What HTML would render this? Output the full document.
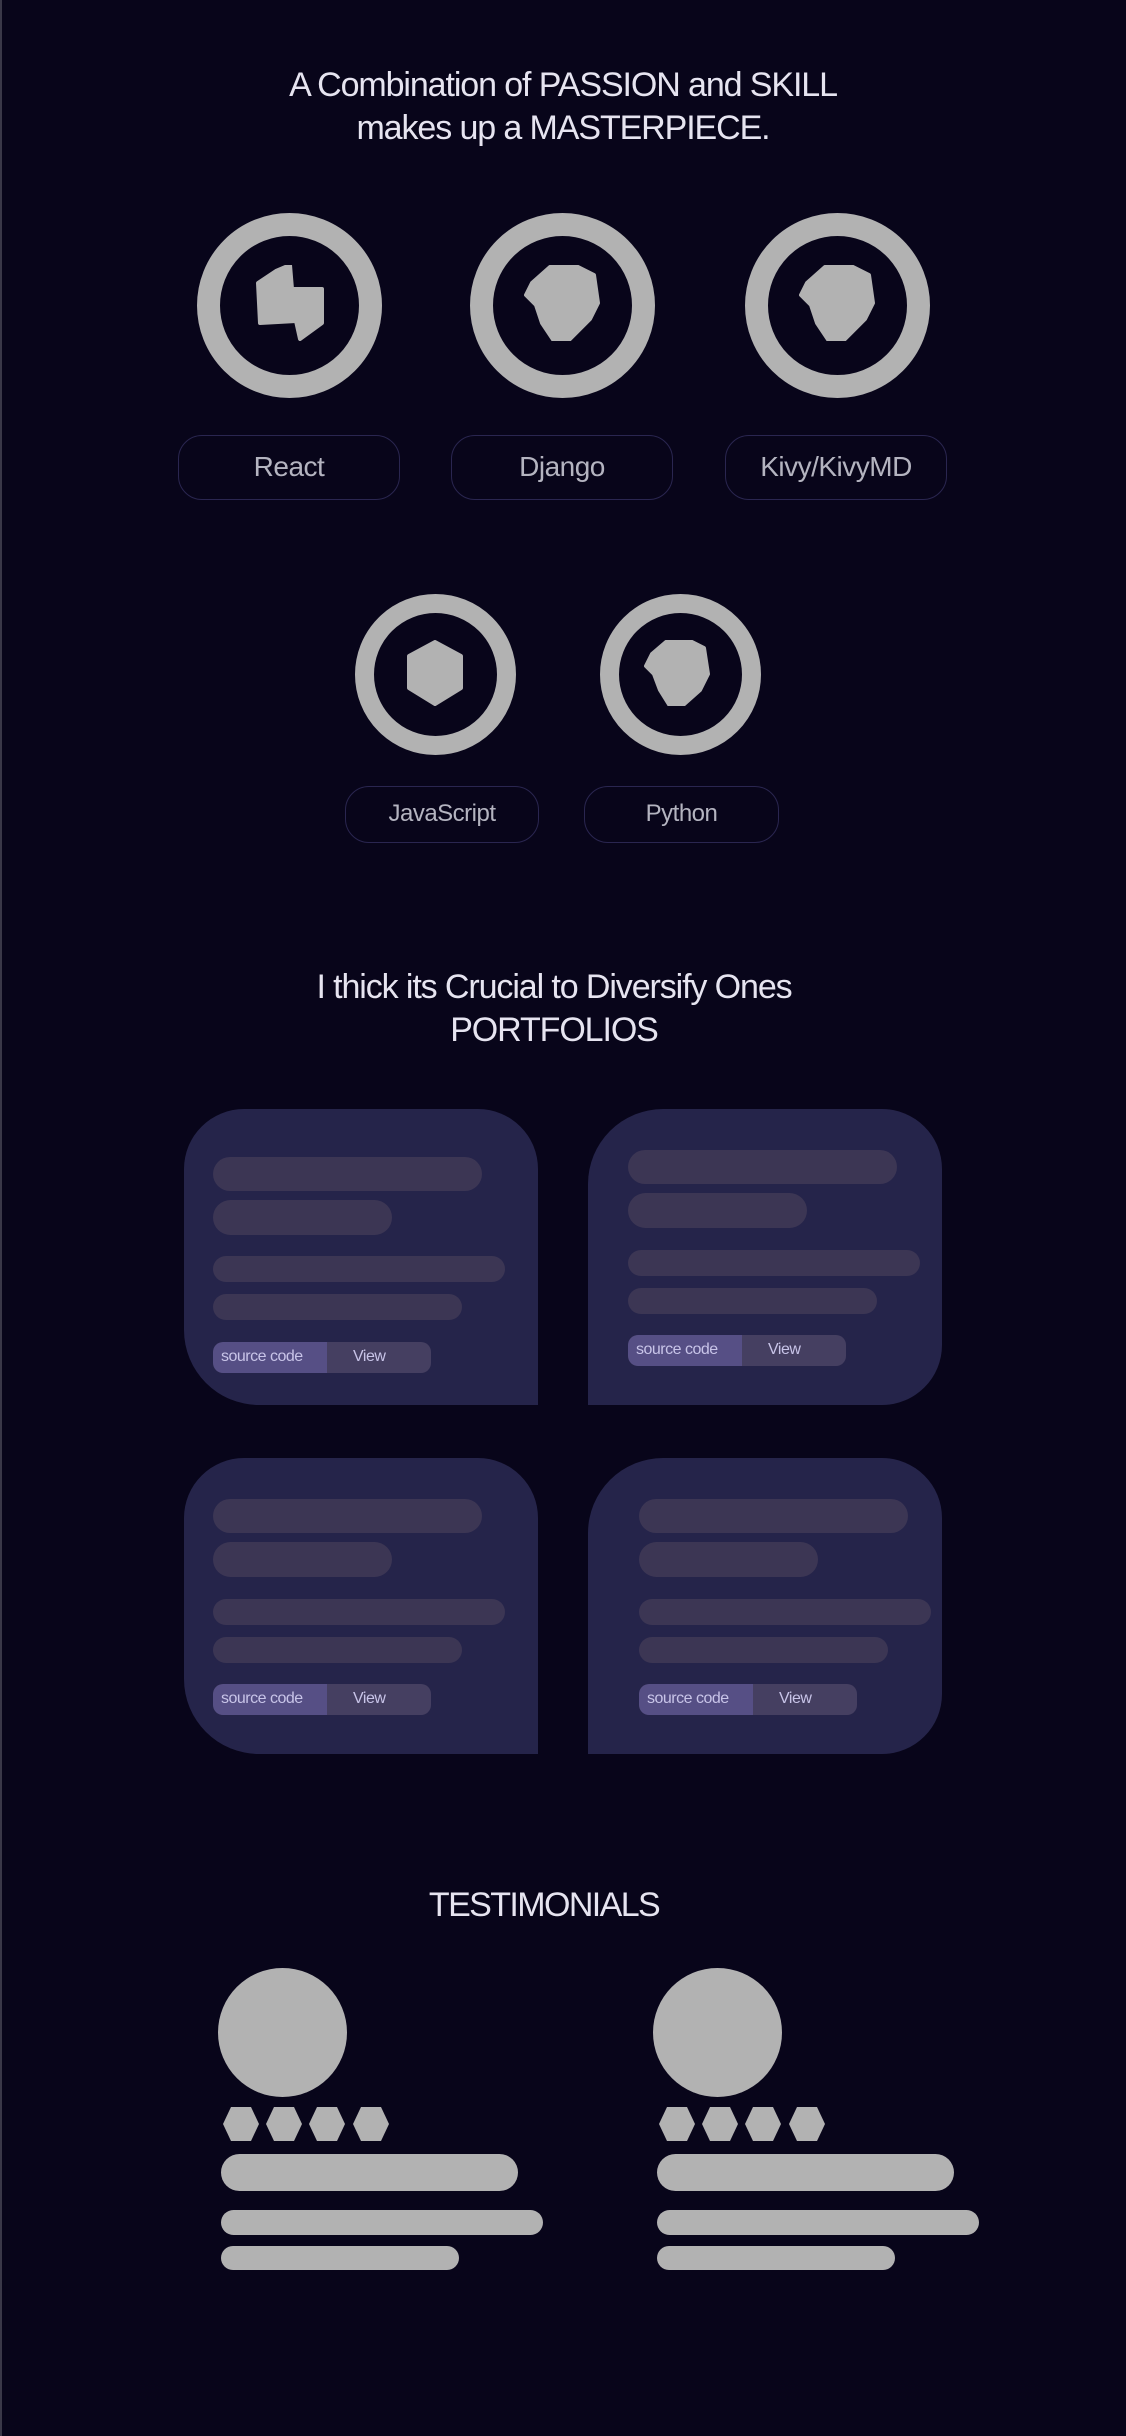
<!DOCTYPE html>
<html><head><meta charset="utf-8"><style>
*{margin:0;padding:0;box-sizing:border-box}
body{width:1126px;height:2436px;background:#08051a;position:relative;overflow:hidden;font-family:"Liberation Sans",sans-serif}
.a{position:absolute}
.h{position:absolute;left:0;width:1126px;text-align:center;color:#e6e4f0;font-size:34px;line-height:43px;letter-spacing:-1.1px}
.ring{position:absolute;border-radius:50%;border:solid #b2b2b2}
.pill{position:absolute;border:1.5px solid #2a2650;border-radius:24px;color:#b4b4c0;text-align:center;letter-spacing:-0.5px}
.card{position:absolute;background:#25244a;width:354px;height:296px}
.bar{position:absolute;background:#3c3654;border-radius:18px}
.btn{position:absolute;height:31px;width:218px;border-radius:10px;background:#453f61;overflow:hidden;font-size:16px;color:#c8c4e8;letter-spacing:-0.5px}
.btn span{position:absolute;top:6px}
.btn .s{left:0;top:0;width:114px;height:31px;background:#564f85;border-radius:10px 0 0 10px}
.g{position:absolute;background:#b2b2b2;border-radius:20px}
</style></head><body>
<div class="a" style="left:0;top:0;width:2px;height:2436px;background:#3a3848"></div>
<div class="h" style="top:64px">A Combination of PASSION and SKILL<br>makes up a MASTERPIECE.</div>

<div class="ring" style="left:197px;top:213px;width:185px;height:185px;border-width:23px"></div>
<div class="ring" style="left:470px;top:213px;width:185px;height:185px;border-width:23px"></div>
<div class="ring" style="left:745px;top:213px;width:185px;height:185px;border-width:23px"></div>
<svg class="a" style="left:254px;top:265px" width="72" height="76" viewBox="0 0 72 76"><path d="M22 6 L36 0 L38 24 L68 24 L68 58 L46 74 L42 56 L6 58 L4 18 Z" fill="#b2b2b2" stroke="#b2b2b2" stroke-width="4" stroke-linejoin="round"/></svg>
<svg class="a" style="left:520px;top:265px" width="80" height="76" viewBox="0 0 80 76"><path d="M30 2 L54 0 L74 10 L78 38 L70 54 L48 76 L34 76 L22 58 L16 40 L6 30 L12 18 Z" fill="#b2b2b2" stroke="#b2b2b2" stroke-width="4" stroke-linejoin="round"/></svg>
<svg class="a" style="left:795px;top:265px" width="80" height="76" viewBox="0 0 80 76"><path d="M30 2 L54 0 L74 10 L78 38 L70 54 L48 76 L34 76 L22 58 L16 40 L6 30 L12 18 Z" fill="#b2b2b2" stroke="#b2b2b2" stroke-width="4" stroke-linejoin="round"/></svg>

<div class="pill" style="left:178px;top:435px;width:222px;height:65px;font-size:28px;line-height:62px">React</div>
<div class="pill" style="left:451px;top:435px;width:222px;height:65px;font-size:28px;line-height:62px">Django</div>
<div class="pill" style="left:725px;top:435px;width:222px;height:65px;font-size:28px;line-height:62px">Kivy/KivyMD</div>

<div class="ring" style="left:355px;top:594px;width:161px;height:161px;border-width:19px"></div>
<div class="ring" style="left:600px;top:594px;width:161px;height:161px;border-width:19px"></div>
<svg class="a" style="left:405px;top:640px" width="60" height="66" viewBox="0 0 60 66"><path d="M30 2 L56 16 L56 48 L30 64 L4 48 L4 16 Z" fill="#b2b2b2" stroke="#b2b2b2" stroke-width="4" stroke-linejoin="round"/></svg>
<svg class="a" style="left:642px;top:640px" width="70" height="66" viewBox="0 0 70 66"><path d="M24 2 L46 0 L62 8 L66 34 L58 50 L40 66 L28 66 L18 50 L12 34 L4 26 L10 14 Z" fill="#b2b2b2" stroke="#b2b2b2" stroke-width="4" stroke-linejoin="round"/></svg>

<div class="pill" style="left:345px;top:786px;width:194px;height:57px;font-size:24px;line-height:54px">JavaScript</div>
<div class="pill" style="left:584px;top:786px;width:195px;height:57px;font-size:24px;line-height:54px">Python</div>

<div class="h" style="top:966px;left:-9px">I thick its Crucial to Diversify Ones<br>PORTFOLIOS</div>

<div class="card" style="left:184px;top:1109px;border-radius:60px 60px 0 75px"></div>
<div class="bar" style="left:213px;top:1157px;width:269px;height:34px"></div>
<div class="bar" style="left:213px;top:1200px;width:179px;height:35px"></div>
<div class="bar" style="left:213px;top:1256px;width:292px;height:26px"></div>
<div class="bar" style="left:213px;top:1294px;width:249px;height:26px"></div>
<div class="btn" style="left:213px;top:1342px"><div class="s"></div><span style="left:8px">source code</span><span style="left:140px">View</span></div>

<div class="card" style="left:588px;top:1109px;border-radius:75px 60px 60px 0"></div>
<div class="bar" style="left:628px;top:1150px;width:269px;height:34px"></div>
<div class="bar" style="left:628px;top:1193px;width:179px;height:35px"></div>
<div class="bar" style="left:628px;top:1250px;width:292px;height:26px"></div>
<div class="bar" style="left:628px;top:1288px;width:249px;height:26px"></div>
<div class="btn" style="left:628px;top:1335px"><div class="s"></div><span style="left:8px">source code</span><span style="left:140px">View</span></div>

<div class="card" style="left:184px;top:1458px;border-radius:60px 60px 0 75px"></div>
<div class="bar" style="left:213px;top:1499px;width:269px;height:34px"></div>
<div class="bar" style="left:213px;top:1542px;width:179px;height:35px"></div>
<div class="bar" style="left:213px;top:1599px;width:292px;height:26px"></div>
<div class="bar" style="left:213px;top:1637px;width:249px;height:26px"></div>
<div class="btn" style="left:213px;top:1684px"><div class="s"></div><span style="left:8px">source code</span><span style="left:140px">View</span></div>

<div class="card" style="left:588px;top:1458px;border-radius:75px 60px 60px 0"></div>
<div class="bar" style="left:639px;top:1499px;width:269px;height:34px"></div>
<div class="bar" style="left:639px;top:1542px;width:179px;height:35px"></div>
<div class="bar" style="left:639px;top:1599px;width:292px;height:26px"></div>
<div class="bar" style="left:639px;top:1637px;width:249px;height:26px"></div>
<div class="btn" style="left:639px;top:1684px"><div class="s"></div><span style="left:8px">source code</span><span style="left:140px">View</span></div>

<div class="h" style="top:1884px;left:-19px;letter-spacing:-1.6px">TESTIMONIALS</div>

<div class="g" style="left:218px;top:1968px;width:129px;height:129px;border-radius:50%"></div>
<div class="g" style="left:653px;top:1968px;width:129px;height:129px;border-radius:50%"></div>
<svg class="a" style="left:223px;top:2107px" width="180" height="34" viewBox="0 0 180 34"><g fill="#b2b2b2"><path d="M8 0H28L36 17L28 34H8L0 17Z"/><path d="M51 0H71L79 17L71 34H51L43 17Z"/><path d="M94 0H114L122 17L114 34H94L86 17Z"/><path d="M138 0H158L166 17L158 34H138L130 17Z"/></g></svg>
<svg class="a" style="left:659px;top:2107px" width="180" height="34" viewBox="0 0 180 34"><g fill="#b2b2b2"><path d="M8 0H28L36 17L28 34H8L0 17Z"/><path d="M51 0H71L79 17L71 34H51L43 17Z"/><path d="M94 0H114L122 17L114 34H94L86 17Z"/><path d="M138 0H158L166 17L158 34H138L130 17Z"/></g></svg>
<div class="g" style="left:221px;top:2154px;width:297px;height:37px"></div>
<div class="g" style="left:221px;top:2210px;width:322px;height:25px"></div>
<div class="g" style="left:221px;top:2246px;width:238px;height:24px"></div>
<div class="g" style="left:657px;top:2154px;width:297px;height:37px"></div>
<div class="g" style="left:657px;top:2210px;width:322px;height:25px"></div>
<div class="g" style="left:657px;top:2246px;width:238px;height:24px"></div>
</body></html>
